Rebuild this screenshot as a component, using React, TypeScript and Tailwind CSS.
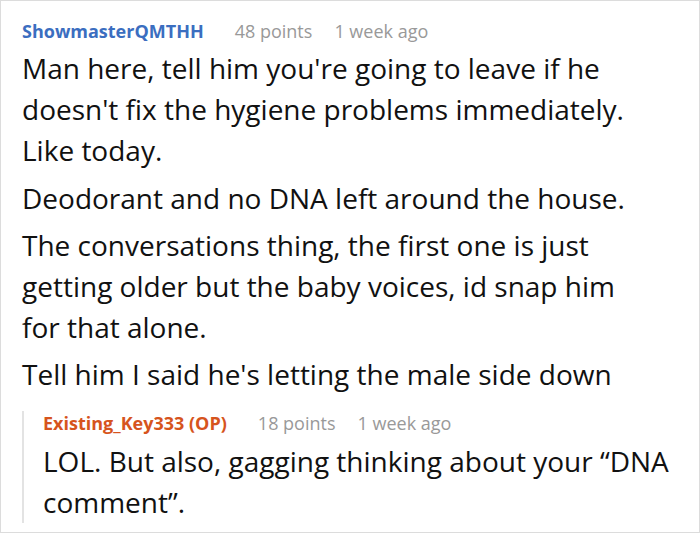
import React from "react";

export default function App() {
  const body = "text-[28px] leading-[41px] text-[#111]";
  return (
    <div className="w-[700px] h-[533px] bg-white border border-[#dcdcdc] overflow-hidden" style={{ fontFamily: '"Open Sans", "Noto Sans", sans-serif' }}>
      <div className="pl-[21px] pt-[15px]">
        <div className="flex items-baseline leading-[30px]">
          <span className="font-bold text-[18px] text-[#3b6ec0]">ShowmasterQMTHH</span>
          <span className="ml-[31px] text-[18px] text-[#999]">48 points</span>
          <span className="ml-[22px] text-[18px] text-[#999]">1 week ago</span>
        </div>
        <div className={`${body} w-[615px]`}>
          <p className="mt-[2px]">Man here, tell him you're going to leave if he doesn't fix the hygiene problems immediately. Like today.</p>
          <p className="mt-[7px]">Deodorant and no DNA left around the house.</p>
          <p className="mt-[6px]">The conversations thing, the first one is just getting older but the baby voices, id snap him for that alone.</p>
          <p className="mt-[6px]">Tell him I said he's letting the male side down</p>
        </div>
        <div className="mt-[16px] border-l-[2px] border-[#e3e3e3] pl-[19px] w-[679px]">
          <div className="flex items-baseline leading-[24px]">
            <span className="font-bold text-[18px] text-[#d6541d]">Existing_Key333 (OP)</span>
            <span className="ml-[31px] text-[18px] text-[#999]">18 points</span>
            <span className="ml-[22px] text-[18px] text-[#999]">1 week ago</span>
          </div>
          <p className={`${body} mt-[6px] mb-[-8px] leading-[39px]`}>LOL. But also, gagging thinking about your “DNA comment”.</p>
        </div>
      </div>
    </div>
  );
}
